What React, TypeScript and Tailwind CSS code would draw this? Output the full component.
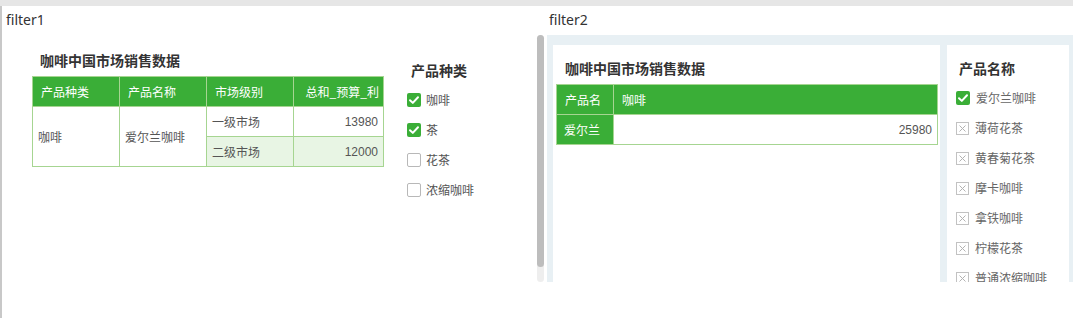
import * as React from "react";

type BoxState = "on" | "off" | "x";

const CheckBox = ({ state }: { state: BoxState }) => {
  if (state === "on") {
    return (
      <span className="w-[14px] h-[14px] rounded-[2px] bg-[#3aae37] flex items-center justify-center shrink-0">
        <svg width="14" height="14" viewBox="0 0 14 14">
          <polyline points="3,7.2 5.8,9.9 11,4.3" fill="none" stroke="#fff" strokeWidth="2" strokeLinecap="round" strokeLinejoin="round" />
        </svg>
      </span>
    );
  }
  if (state === "x") {
    return (
      <span className="w-[13px] h-[13px] border border-[#c2c2c2] bg-white flex items-center justify-center shrink-0">
        <svg width="11" height="11" viewBox="0 0 11 11">
          <path d="M2.5 2.5 L8.5 8.5 M8.5 2.5 L2.5 8.5" stroke="#b3b3b3" strokeWidth="1" />
        </svg>
      </span>
    );
  }
  return <span className="w-[14px] h-[14px] rounded-[2px] border border-[#b8b8b8] bg-white shrink-0" />;
};

const typeItems: { label: string; state: BoxState }[] = [
  { label: "咖啡", state: "on" },
  { label: "茶", state: "on" },
  { label: "花茶", state: "off" },
  { label: "浓缩咖啡", state: "off" },
];

const nameItems: { label: string; state: BoxState }[] = [
  { label: "爱尔兰咖啡", state: "on" },
  { label: "薄荷花茶", state: "x" },
  { label: "黄春菊花茶", state: "x" },
  { label: "摩卡咖啡", state: "x" },
  { label: "拿铁咖啡", state: "x" },
  { label: "柠檬花茶", state: "x" },
  { label: "普通浓缩咖啡", state: "x" },
];

const th = "h-[30px] border border-[#a6d591] bg-[#3aae37] text-white font-normal text-[12px] text-left pl-[8px] whitespace-nowrap overflow-hidden";
const td = "h-[30px] border border-[#a6d591] text-[12px] text-[#555] pl-[5px] whitespace-nowrap";

export default function App() {
  return (
    <div className="w-[1073px] h-[318px] bg-white overflow-hidden text-[#333] font-['Noto_Sans_CJK_SC','Noto_Sans',sans-serif]">
      <div className="h-[6px] bg-[#e6e6e6]" />
      <div className="flex h-[312px]">
        {/* filter1 */}
        <div className="w-[547px] flex flex-col border-l-2 border-[#c8c8c8]">
          <div className="h-[29px] pl-[4px] pt-[4px] text-[14px] leading-[20px] text-[#333] font-['Noto_Sans',sans-serif]">filter1</div>
          <div className="flex items-start">
            <div className="pl-[30px]">
              <div className="mt-[15px] pl-[8px] text-[14px] leading-[20px] font-bold text-[#333]">咖啡中国市场销售数据</div>
              <table className="mt-[6px] w-[351px] table-fixed border-collapse">
                <colgroup>
                  <col className="w-[87px]" />
                  <col className="w-[87px]" />
                  <col className="w-[87px]" />
                  <col className="w-[90px]" />
                </colgroup>
                <thead>
                  <tr>
                    <th className={th}>产品种类</th>
                    <th className={th}>产品名称</th>
                    <th className={th}>市场级别</th>
                    <th className={th + " text-right pr-[4px]"}>总和_预算_利</th>
                  </tr>
                </thead>
                <tbody>
                  <tr>
                    <td rowSpan={2} className={td}>咖啡</td>
                    <td rowSpan={2} className={td}>爱尔兰咖啡</td>
                    <td className={td}>一级市场</td>
                    <td className={td + " text-right pr-[5px] font-['Liberation_Sans',sans-serif]"}>13980</td>
                  </tr>
                  <tr>
                    <td className={td + " bg-[#e8f5e4]"}>二级市场</td>
                    <td className={td + " bg-[#e8f5e4] text-right pr-[5px] font-['Liberation_Sans',sans-serif]"}>12000</td>
                  </tr>
                </tbody>
              </table>
            </div>
            <div className="ml-[23px] mt-[25px]">
              <div className="pl-[4px] text-[14px] leading-[20px] font-bold text-[#333]">产品种类</div>
              <div className="mt-[5px] flex flex-col">
                {typeItems.map((it) => (
                  <div key={it.label} className="h-[30px] flex items-center gap-[5px]">
                    <CheckBox state={it.state} />
                    <span className="text-[12px] text-[#555]">{it.label}</span>
                  </div>
                ))}
              </div>
            </div>
            <div className="ml-auto mr-[3px] w-[7px] h-[247px] rounded-full bg-[#eeeeee]">
              <div className="h-[232px] rounded-full bg-[#bdbdbd]" />
            </div>
          </div>
        </div>

        {/* filter2 */}
        <div className="flex-1 flex flex-col">
          <div className="h-[29px] pl-[2px] pt-[4px] text-[14px] leading-[20px] text-[#333] font-['Noto_Sans',sans-serif]">filter2</div>
          <div className="h-[247px] bg-[#e8f0f4] flex pl-[6px] pr-[4px] pt-[10px] gap-[7px]">
            <div className="w-[387px] bg-white">
              <div className="mt-[13px] pl-[12px] text-[14px] leading-[20px] font-bold text-[#333]">咖啡中国市场销售数据</div>
              <table className="mt-[6px] ml-[3px] w-[382px] table-fixed border-collapse">
                <colgroup>
                  <col className="w-[57px]" />
                  <col />
                </colgroup>
                <thead>
                  <tr>
                    <th className={th + " pl-[7px]"}>产品名</th>
                    <th className={th}>咖啡</th>
                  </tr>
                </thead>
                <tbody>
                  <tr>
                    <td className={td + " bg-[#3aae37] text-white pl-[7px]"}>爱尔兰</td>
                    <td className={td + " text-right pr-[5px] font-['Liberation_Sans',sans-serif]"}>25980</td>
                  </tr>
                </tbody>
              </table>
            </div>
            <div className="w-[122px] bg-white overflow-hidden">
              <div className="mt-[13px] pl-[12px] text-[14px] leading-[20px] font-bold text-[#333]">产品名称</div>
              <div className="mt-[5px] pl-[9px] flex flex-col">
                {nameItems.map((it) => (
                  <div key={it.label} className="h-[30px] flex items-center gap-[6px]">
                    <CheckBox state={it.state} />
                    <span className="text-[12px] text-[#666] whitespace-nowrap">{it.label}</span>
                  </div>
                ))}
              </div>
            </div>
          </div>
        </div>
      </div>
    </div>
  );
}
